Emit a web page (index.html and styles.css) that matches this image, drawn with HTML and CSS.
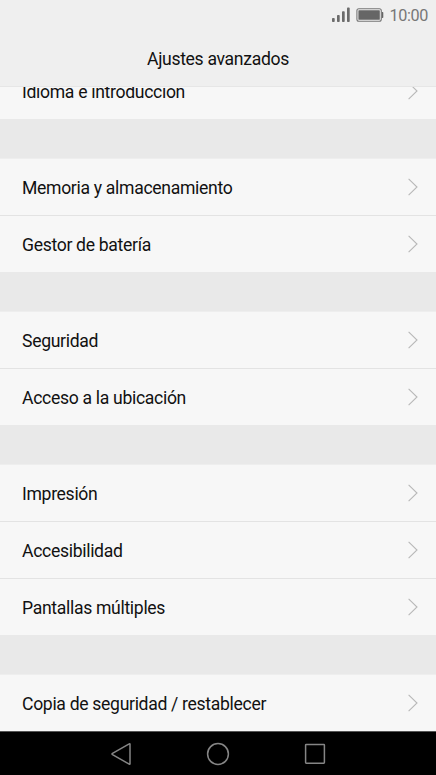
FILE: index.html
```
<!DOCTYPE html>
<html lang="es">
<head>
<meta charset="utf-8">
<title>Ajustes avanzados</title>
<link rel="stylesheet" href="styles.css">
</head>
<body>
<svg class="defs" aria-hidden="true"><symbol id="chevron" viewBox="0 0 12 20"><path d="M1.6 1.8 L10 10 L1.6 18.2" fill="none" stroke="#b8b8b8" stroke-width="1.1"/></symbol></svg>
<div class="screen">
  <header class="header">
    <div class="status">
      <svg class="signal" width="20" height="16" viewBox="0 0 20 16"><g fill="#6b6b6b"><rect x="1" y="11" width="2.7" height="4" rx=".8"/><rect x="6" y="8" width="2.7" height="7" rx=".8"/><rect x="11" y="4.3" width="2.7" height="10.7" rx=".8"/><rect x="16" y="0.6" width="2.7" height="14.4" rx=".8"/></g></svg>
      <svg class="battery" width="28" height="14" viewBox="0 0 28 14"><rect x=".9" y=".7" width="24.4" height="12.6" rx="2" fill="none" stroke="#777" stroke-width="1.1"/><rect x="2.4" y="2.2" width="21.4" height="9.6" rx=".6" fill="#666"/><path d="M25.8 4h.8q.7 0 .7.8v4.4q0 .8-.7.8h-.8z" fill="#666"/></svg>
      <span class="clock">10:00</span>
    </div>
    <h1 class="title">Ajustes avanzados</h1>
  </header>
  <main class="list">
    <section class="group"><div class="row"><span>Idioma e introducción</span><svg class="chevron"><use href="#chevron"/></svg></div></section>
    <section class="group">
      <div class="row"><span>Memoria y almacenamiento</span><svg class="chevron"><use href="#chevron"/></svg></div>
      <div class="row"><span>Gestor de batería</span><svg class="chevron"><use href="#chevron"/></svg></div>
    </section>
    <section class="group">
      <div class="row"><span>Seguridad</span><svg class="chevron"><use href="#chevron"/></svg></div>
      <div class="row"><span>Acceso a la ubicación</span><svg class="chevron"><use href="#chevron"/></svg></div>
    </section>
    <section class="group">
      <div class="row"><span>Impresión</span><svg class="chevron"><use href="#chevron"/></svg></div>
      <div class="row"><span>Accesibilidad</span><svg class="chevron"><use href="#chevron"/></svg></div>
      <div class="row"><span>Pantallas múltiples</span><svg class="chevron"><use href="#chevron"/></svg></div>
    </section>
    <section class="group"><div class="row"><span>Copia de seguridad / restablecer</span><svg class="chevron"><use href="#chevron"/></svg></div></section>
  </main>
  <nav class="nav">
    <svg width="24" height="24" viewBox="0 0 24 24"><path d="M21 2.2V21.8Q21 22.6 20.2 22.1L3.5 12.7Q2.5 12 3.5 11.3L20.2 1.9Q21 1.4 21 2.2Z"/></svg>
    <svg width="24" height="24" viewBox="0 0 24 24"><circle cx="12" cy="12" r="10.4"/></svg>
    <svg width="24" height="24" viewBox="0 0 24 24"><rect x="2.6" y="2.4" width="18.8" height="18.8" rx=".6"/></svg>
  </nav>
</div>
</body>
</html>
```
FILE: styles.css
```
* { box-sizing: border-box; }
body { margin: 0; font-family: Roboto, sans-serif; color: #111; }
.defs { display: none; }
.screen { width: 436px; height: 775px; display: flex; flex-direction: column; overflow: hidden; background: #e9e9e9; }
.header { height: 87px; flex: none; background: #efefef; border-bottom: 1px solid #e6e6e6; }
.status { height: 30px; display: flex; align-items: center; justify-content: flex-end; padding-right: 8px; }
.signal { margin-right: 5px; }
.battery { margin-right: 5px; }
.clock { font-size: 16.2px; letter-spacing: -.35px; line-height: 30px; padding-top: 1px; color: #777; }
.title { margin: 0; font-size: 17.6px; letter-spacing: -.32px; font-weight: 400; line-height: 58px; text-align: center; }
.list { flex: 1; min-height: 0; overflow: hidden; }
.group { margin-bottom: 39px; background: #f7f7f7; }
.group:first-child { margin-top: -25px; }
.row { height: 57px; display: flex; align-items: center; justify-content: space-between; padding: 1px 17px 0 22px; font-size: 17.6px; letter-spacing: -.32px; line-height: 24px; }
.row span { padding-top: 2px; }
.row + .row { border-top: 1px solid #e3e3e3; padding-top: 0; }
.group + .group .row:first-child { border-top: 1px solid #eee; padding-top: 0; padding-bottom: 1px; }
.chevron { width: 12px; height: 20px; }
.nav { height: 44px; flex: none; display: flex; align-items: center; justify-content: center; gap: 73px; background: #000; border-top: 1px solid #555; }
.nav svg { fill: none; stroke: #858585; stroke-width: 1.5; }
```
